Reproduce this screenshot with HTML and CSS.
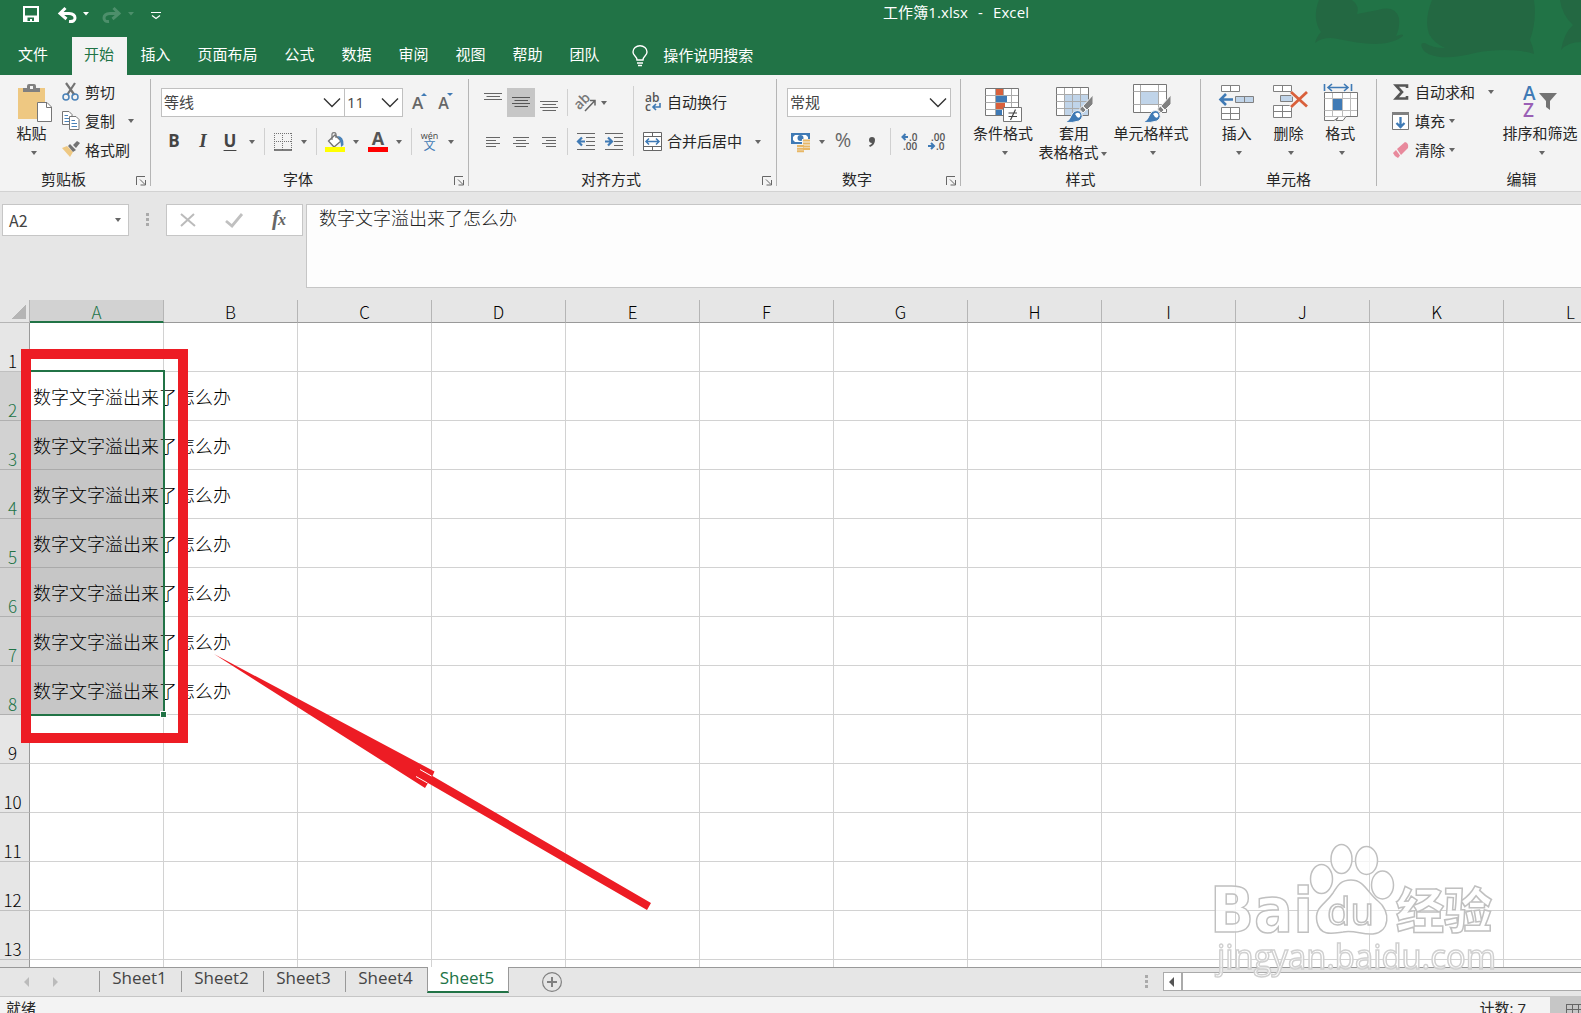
FILE: index.html
```html
<!DOCTYPE html>
<html lang="zh-CN">
<head>
  <meta charset="UTF-8" />
  <title>工作簿1.xlsx - Excel</title>
  <link rel="stylesheet" href="styles.css">
</head>
<body>
  <!-- Title bar and tabs -->
  <header class="top">
    <svg class="clouds" width="281" height="75" viewBox="1300 0 281 75">
      <path d="M1319 0C1314 12 1315 24 1321 32Q1317 36 1315 43Q1324 36 1338 39C1362 44 1388 48 1403 36Q1404 33 1396 36Q1400 28 1399 18Q1395 5 1378 10L1357 14Q1360 6 1352 0Z" />
      <path d="M1432 0Q1424 20 1429 34Q1434 43 1445 48Q1432 48 1425 43Q1418 42 1424 51C1435 60 1455 58 1475 53C1500 48 1522 50 1534 54Q1533 46 1530 40Q1537 20 1534 0Z" />
      <path d="M1560 0Q1562 15 1573 25Q1564 33 1561 50Q1568 42 1581 42V0Z" />
    </svg>
    <div class="title-row">
      <svg class="quick" width="170" height="37" viewBox="0 0 170 37">
        <path d="M24 7H38V21H24Z" fill="none" stroke="#fff" stroke-width="2" />
        <path d="M25 15.500H37V21H25Z" fill="#fff" />
        <path d="M27.500 17.500H34V21H32V19H30V21H27.500Z" fill="#217346" />
        <g fill="none" stroke="#fff" stroke-width="3">
          <path d="M60 13.500H69Q75 14 75 18T69 21.500" />
          <path d="M65.500 8L60 13.500L66.500 19" />
        </g>
        <path d="M83 12H89L86 15.500Z" fill="#fff" />
        <g fill="none" stroke="#4d8f6b" stroke-width="3">
          <path d="M119 13.500H110Q104 14 104 18T109 21.500" />
          <path d="M113.500 8L119 13.500L112.500 19" />
        </g>
        <path d="M128 12H134L131 15.500Z" fill="#4d8f6b" />
        <path d="M151 12.500H161M152 15.500L156 18.500L160 15.500" fill="none" stroke="#fff" stroke-width="1.200" />
      </svg>
      <span class="doc-name">工作簿1.xlsx&nbsp; -&nbsp; Excel</span>
    </div>
    <nav class="tabs">
      <span class="tab file">文件</span>
      <span class="tab active">开始</span>
      <span class="tab">插入</span>
      <span class="tab">页面布局</span>
      <span class="tab">公式</span>
      <span class="tab">数据</span>
      <span class="tab">审阅</span>
      <span class="tab">视图</span>
      <span class="tab">帮助</span>
      <span class="tab">团队</span>
      <span class="tell-me">
        <svg width="16" height="22" viewBox="0 0 16 22" fill="none" stroke="#fff" stroke-width="1.400">
          <path d="M5 16Q5 14 3 12Q1 10 1 8A7 6.300 0 0 1 15 8Q15 10 13 12Q11 14 11 16ZM5 19H11M6 21.500H10" />
        </svg>
        操作说明搜索
      </span>
    </nav>
  </header>

  <!-- Ribbon -->
  <section class="ribbon">
    <div class="group clipboard">
      <div class="group-body">
        <div class="big">
          <svg width="36" height="38" viewBox="0 0 36 38">
            <rect x="1" y="4" width="27" height="31" fill="#eec882" />
            <path d="M6 8V4H10V2Q10 0 12 0H17Q19 0 19 2V4H23V8Z" fill="#808080" />
            <rect x="13" y="2" width="3" height="3" fill="#f3f3f3" />
            <path d="M20.500 18.500H30L34.500 23V37.500H20.500Z" fill="#fff" stroke="#767676" />
            <path d="M29.500 18.500V23.500H34.500" fill="none" stroke="#767676" />
          </svg>
          <span>粘贴</span>
          <i class="dd"></i>
        </div>
        <div class="list">
          <div>
            <svg width="18" height="20" viewBox="0 0 18 20" fill="none">
              <path d="M4 1L12.500 13M13 1L5 13" stroke="#737373" stroke-width="2.200" />
              <circle cx="4" cy="15" r="3" stroke="#4a82b8" stroke-width="1.500" />
              <circle cx="13" cy="15" r="3" stroke="#4a82b8" stroke-width="1.500" />
            </svg>
            <span>剪切</span>
          </div>
          <div>
            <svg width="18" height="19" viewBox="0 0 18 19">
              <path d="M.5 .5H7L10 3.500V13.500H.5Z" fill="#fff" stroke="#767676" />
              <path d="M2.500 4.500H6M2.500 7.500H7M2.500 10.500H7" stroke="#4a82b8" />
              <path d="M7.500 5.500H14L17 8.500V18.500H7.500Z" fill="#fff" stroke="#767676" />
              <path d="M9.500 9.500H13M9.500 12.500H15M9.500 15.500H15" stroke="#4a82b8" />
            </svg>
            <span>复制</span>
            <i class="dd far"></i>
          </div>
          <div>
            <svg width="18" height="17" viewBox="0 0 18 17">
              <path d="M0 7L5 5L11 11L8 16Z" fill="#eec882" />
              <path d="M6 5L8 3L14 9L11 11ZM11 4L15 0L18 2L14 7Z" fill="#737373" />
            </svg>
            <span>格式刷</span>
          </div>
        </div>
      </div>
      <div class="group-label">剪贴板<svg class="launch" width="11" height="10"><use href="#launcher" /></svg></div>
    </div>

    <div class="group font">
      <div class="group-body rows">
        <div class="row">
          <div class="combo font-name">等线<svg class="chev" width="18" height="10"><use href="#chevron" /></svg></div>
          <div class="combo font-size">11<svg class="chev" width="18" height="10"><use href="#chevron" /></svg></div>
          <span class="grow-a">A<i class="tip up"></i></span>
          <span class="grow-a small">A<i class="tip down"></i></span>
        </div>
        <div class="row font-cells">
          <b class="letter">B</b>
          <b class="letter italic">I</b>
          <b class="letter under">U</b>
          <i class="dd"></i>
          <i class="sep"></i>
          <svg width="18" height="18" viewBox="0 0 18 18" fill="none" stroke="#737373">
            <path d="M0 .5H18M0 8.500H18M.5 0V17M8.500 0V17M17.500 0V17" stroke-dasharray="1 1" />
            <path d="M0 17H18" stroke="#555" stroke-width="1.500" />
          </svg>
          <i class="dd"></i>
          <i class="sep"></i>
          <svg width="20" height="20" viewBox="0 0 20 20">
            <path d="M3.500 9L10 3L16 9L9 15Z" fill="#fff" stroke="#737373" stroke-width="1.300" />
            <path d="M7 8V2Q7 .7 9 .7T11 2V6" fill="none" stroke="#737373" stroke-width="1.200" />
            <path d="M12 4Q19 4 18.500 13L16 15Q16 8 12 4Z" fill="#4a82b8" />
            <rect y="15" width="20" height="5" fill="#ff0" />
          </svg>
          <i class="dd"></i>
          <span class="font-color">A</span>
          <i class="dd"></i>
          <i class="sep"></i>
          <span class="pinyin"><span>wén</span><span class="wen">文</span></span>
          <i class="dd"></i>
        </div>
      </div>
      <div class="group-label">字体<svg class="launch" width="11" height="10"><use href="#launcher" /></svg></div>
    </div>

    <div class="group align">
      <div class="group-body">
        <div class="rows align-left">
          <div class="row align-cells">
            <svg width="18" height="29" stroke="#666"><path d="M0 5.500H18M2.500 8.500H16M0 11.500H18" /></svg>
            <span class="pressed"><svg width="18" height="29" stroke="#555"><path d="M0 9.500H18M2.500 12.500H16M0 15.500H18M2.500 18.500H16" /></svg></span>
            <svg width="18" height="29" stroke="#666"><path d="M0 13.500H18M2.500 16.500H16M0 19.500H18M2.500 22.500H16" /></svg>
            <i class="sep"></i>
            <svg width="20" height="18" viewBox="0 0 20 18">
              <text x="-2" y="12" class="ab" transform="rotate(-45 6 8)">ab</text>
              <path d="M9 17L19 6.500M14 6.500H19V11.500" fill="none" stroke="#666" stroke-width="1.500" />
            </svg>
            <i class="dd"></i>
          </div>
          <div class="row align-cells">
            <svg width="14" height="12" stroke="#666"><path d="M0 1.500H14M0 4.500H10M0 7.500H14M0 10.500H10" /></svg>
            <svg width="16" height="12" stroke="#666"><path d="M0 1.500H16M3 4.500H13M0 7.500H16M3 10.500H13" /></svg>
            <svg width="14" height="12" stroke="#666"><path d="M0 1.500H14M4 4.500H14M0 7.500H14M4 10.500H14" /></svg>
            <i class="sep"></i>
            <svg width="18" height="17" viewBox="0 0 18 17" fill="none">
              <path d="M0 .5H18M9 4.500H18M9 8.500H18M9 12.500H18M0 16.500H18" stroke="#666" />
              <path d="M8 8.500H1M5 4.500L1 8.500L5 12.500" stroke="#3f7ab5" stroke-width="2.200" />
            </svg>
            <svg width="18" height="17" viewBox="0 0 18 17" fill="none">
              <path d="M0 .5H18M9 4.500H18M9 8.500H18M9 12.500H18M0 16.500H18" stroke="#666" />
              <path d="M0 8.500H7M3 4.500L7 8.500L3 12.500" stroke="#3f7ab5" stroke-width="2.200" />
            </svg>
          </div>
        </div>
        <div class="rows align-right">
          <div class="row">
            <svg width="19" height="20" viewBox="0 0 19 20">
              <text x="2" y="9" class="abc">ab</text>
              <text x="2" y="18" class="abc">c</text>
              <path d="M17 10V14H10M13 11L10 14L13 17" fill="none" stroke="#3f7ab5" stroke-width="1.600" />
            </svg>
            <span>自动换行</span>
          </div>
          <div class="row">
            <svg width="19" height="19" viewBox="0 0 19 19" fill="none">
              <path d="M.5 .5H18.500V18.500H.5ZM.5 4.500H18.500M.5 14.500H18.500M9.500 .5V4.500M9.500 14.500V18.500" fill="#fff" stroke="#666" />
              <path d="M3 9.500H16M6 6.500L3 9.500L6 12.500M13 6.500L16 9.500L13 12.500" stroke="#3f7ab5" stroke-width="1.500" />
            </svg>
            <span>合并后居中</span>
            <i class="dd merge"></i>
          </div>
        </div>
      </div>
      <div class="group-label">对齐方式<svg class="launch" width="11" height="10"><use href="#launcher" /></svg></div>
    </div>

    <div class="group number">
      <div class="group-body rows">
        <div class="row">
          <div class="combo number-format">常规<svg class="chev" width="18" height="10"><use href="#chevron" /></svg></div>
        </div>
        <div class="row number-cells">
          <svg width="20" height="20" viewBox="0 0 20 20">
            <path d="M0 1H19V12H0Z" fill="#3f7ab5" />
            <path d="M2 5L4 3H15L17 5V8L15 10H4L2 8Z" fill="#fff" />
            <circle cx="9.500" cy="6" r="3" fill="#3f7ab5" />
            <path d="M11 7H20V18H14V21H5V13H11Z" fill="#f3f3f3" />
            <path d="M12 8.500H19M12 11.500H19M12 14.500H19M12 17H19M6 14H13M6 16.700H13M6 19.200H13" stroke="#e8b765" stroke-width="1.900" />
          </svg>
          <i class="dd"></i>
          <span class="percent">%</span>
          <svg width="8" height="10" viewBox="0 0 8 10"><path d="M4 0A3 3 0 0 1 7 3Q7 8 2 10L1 8.500Q4 7 4 6A3 3 0 0 1 4 0Z" fill="#555" /></svg>
          <i class="sep"></i>
          <svg width="17" height="19" viewBox="0 0 17 19">
            <path d="M7 5H1.500M4.500 2L1.500 5L4.500 8" fill="none" stroke="#3f7ab5" stroke-width="2" />
            <text x="8" y="9" class="dec">.0</text>
            <text x="2" y="18" class="dec">.00</text>
          </svg>
          <svg width="17" height="19" viewBox="0 0 17 19">
            <text x="3" y="9" class="dec">.00</text>
            <text x="8" y="18" class="dec">.0</text>
            <path d="M0 14H6M3 11L6 14L3 17" fill="none" stroke="#3f7ab5" stroke-width="2" />
          </svg>
        </div>
      </div>
      <div class="group-label">数字<svg class="launch" width="11" height="10"><use href="#launcher" /></svg></div>
    </div>

    <div class="group styles">
      <div class="group-body">
        <div class="big cond">
          <svg width="38" height="38" viewBox="0 0 38 38">
            <path d="M1.500 4.500H34.500V31.500H1.500Z" fill="#fff" stroke="#767676" />
            <path d="M1.500 11.500H34M1.500 18.500H34M1.500 25.500H34M11.500 5V31M19.500 5V31M27.500 5V31" fill="none" stroke="#aaa" />
            <path d="M12 5H19V11H12ZM12 19H21V25H12Z" fill="#d9603b" />
            <path d="M12 12H23V18H12ZM12 26H18V31H12Z" fill="#3f7ab5" />
            <path d="M19.500 23.500H37.500V37.500H19.500Z" fill="#fff" stroke="#767676" />
            <path d="M24.500 29H33M24.500 32.500H33M31.500 25.500L26.500 36" stroke="#444" stroke-width="1.200" />
          </svg>
          <span>条件格式</span>
          <i class="dd"></i>
        </div>
        <div class="big table-style">
          <svg width="38" height="38" viewBox="0 0 38 38">
            <path d="M1.500 3.500H33.500V31.500H1.500Z" fill="#fff" stroke="#767676" />
            <path d="M10 11H33V31H10Z" fill="#c0d4e9" />
            <path d="M1.500 10.500H33M1.500 17.500H33M1.500 24.500H33M9.500 4V31M17.500 4V31M25.500 4V31" stroke="#aaa" />
            <use href="#brush" />
          </svg>
          <span>套用</span>
          <span class="line-two">表格格式<i class="dd"></i></span>
        </div>
        <div class="big cell-style">
          <svg width="38" height="38" viewBox="0 0 38 38">
            <path d="M.5 .5H33.500V28.500H.5Z" fill="#fff" stroke="#767676" />
            <path d="M.5 7.500H33M.5 20.500H33M7.500 1V28M25.500 1V28" stroke="#aaa" />
            <path d="M8 8H25V20H8Z" fill="#c0d4e9" />
            <use href="#brush" />
          </svg>
          <span>单元格样式</span>
          <i class="dd"></i>
        </div>
      </div>
      <div class="group-label plain">样式</div>
    </div>

    <div class="group cells">
      <div class="group-body">
        <div class="big wide">
          <svg width="38" height="38" viewBox="0 0 38 38" fill="#fff" stroke="#808080">
            <path d="M3.500 1.500H21.500V7.500H3.500ZM12.500 1.500V7.500M3.500 23.500H21.500V35.500H3.500ZM12.500 23.500V35.500M3.500 29.500H21.500" />
            <path d="M17.500 12.500H35.500V18.500H17.500ZM26.500 12.500V18.500" fill="#c0d4e9" />
            <path d="M15 15.500H2.500M8 10L2.500 15.500L8 21" fill="none" stroke="#3f7ab5" stroke-width="2.600" />
          </svg>
          <span>插入</span>
          <i class="dd"></i>
        </div>
        <div class="big narrow">
          <svg width="38" height="38" viewBox="0 0 38 38" fill="#fff" stroke="#808080">
            <path d="M3.500 1.500H21.500V7.500H3.500ZM12.500 1.500V7.500M3.500 21.500H21.500V33.500H3.500ZM12.500 21.500V33.500M3.500 27.500H21.500" />
            <path d="M10.500 11.500H22.500V17.500H10.500Z" fill="#c0d4e9" />
            <path d="M21 8L37 22.500M37 8L21 23" fill="none" stroke="#f3f3f3" stroke-width="5" />
            <path d="M21 8L37 22.500M37 8L21 23" fill="none" stroke="#d9603b" stroke-width="2.800" />
          </svg>
          <span>删除</span>
          <i class="dd"></i>
        </div>
        <div class="big wide">
          <svg width="38" height="38" viewBox="0 0 38 38" fill="none">
            <path d="M2.500 0V7M29.500 0V7M6 3.500H26M10 0L6 3.500L10 7M22 0L26 3.500L22 7" stroke="#3f7ab5" stroke-width="1.600" />
            <path d="M2.500 8.500H35.500V32.500H24L21 36.500H14L16 33.500L12 36.500H2.500Z" fill="#fff" stroke="#767676" />
            <path d="M2.500 14.500H35M2.500 26.500H35M2.500 32.500H24M10.500 9V32M20.500 9V32M28.500 9V32" stroke="#bbb" />
            <path d="M11 15H20V26H11Z" fill="#3f7ab5" />
          </svg>
          <span>格式</span>
          <i class="dd"></i>
        </div>
      </div>
      <div class="group-label plain">单元格</div>
    </div>

    <div class="group editing">
      <div class="group-body">
        <div class="list">
          <div>
            <svg width="18" height="18" viewBox="0 0 18 18"><path d="M15 5V2.500H4L10 9L4 15.500H15V13" fill="none" stroke="#555" stroke-width="2.600" /></svg>
            <span>自动求和</span>
            <i class="dd sum"></i>
          </div>
          <div>
            <svg width="18" height="20" viewBox="0 0 18 20">
              <path d="M.5 1.500H16.500V18.500H.5Z" fill="#fff" stroke="#767676" />
              <path d="M0 1H17V4H0Z" fill="#808080" />
              <path d="M8.500 6V16M4.500 12L8.500 16L12.500 12" fill="none" stroke="#3f7ab5" stroke-width="2.300" />
            </svg>
            <span>填充</span>
            <i class="dd near"></i>
          </div>
          <div>
            <svg width="18" height="18" viewBox="0 0 18 18">
              <path d="M5 8L13 1Q17 2 16 7L9 14Z" fill="#e8899c" />
              <path d="M4 9L8 14.500L6 17Q2 15 1 12Z" fill="#e8899c" />
            </svg>
            <span>清除</span>
            <i class="dd near"></i>
          </div>
        </div>
        <div class="big sort">
          <svg width="36" height="38" viewBox="0 0 36 38">
            <text x="1" y="16" class="sort-a">A</text>
            <text x="1" y="33" class="sort-z">Z</text>
            <path d="M17 9H35L28 17V26L24 23V17Z" fill="#737373" />
          </svg>
          <span>排序和筛选</span>
          <i class="dd"></i>
        </div>
      </div>
      <div class="group-label plain">编辑</div>
    </div>
  </section>

  <!-- Formula bar -->
  <section class="formula">
    <div class="name-box">A2<i class="dd"></i></div>
    <div class="dots"><i></i><i></i><i></i></div>
    <div class="fx-box">
      <svg width="16" height="14" viewBox="0 0 16 14"><path d="M1 1L15 13M14 1L1 13" stroke="#bbb" stroke-width="2" /></svg>
      <svg width="18" height="15" viewBox="0 0 18 15"><path d="M1 8L7 13L17 1" fill="none" stroke="#c0c0c0" stroke-width="2.800" /></svg>
      <span class="fx">f<small>x</small></span>
    </div>
    <div class="formula-text">数字文字溢出来了怎么办</div>
  </section>

  <!-- Sheet -->
  <main class="sheet">
    <div class="col-heads" id="col-heads"></div>
    <div id="grid"></div>
    <div class="selection"></div>
    <div class="handle"></div>
  </main>

  <footer>
    <div class="sheet-tabs">
      <i class="nav-left"></i><i class="nav-right"></i>
      <span>Sheet1</span>
      <span>Sheet2</span>
      <span>Sheet3</span>
      <span>Sheet4</span>
      <span class="current">Sheet5</span>
      <svg width="20" height="20" viewBox="0 0 20 20" fill="none" stroke="#808080"><circle cx="10" cy="10" r="9.400" stroke-width="1.200" /><path d="M5 10H15M10 5V15" stroke-width="2" /></svg>
      <div class="dots"><i></i><i></i><i></i></div>
      <div class="scroll"><i class="nav-left"></i></div>
    </div>
    <div class="status">
      <span>就绪</span>
      <span class="count">计数: 7</span>
      <div class="view"><svg width="17" height="14" viewBox="0 0 17 14"><path d="M.5 .5H18M.5 5.500H18M.5 10.500H18M.5 0V14M6.500 0V14M12.500 0V14" fill="none" stroke="#666" /></svg></div>
    </div>
  </footer>

  <!-- Marks drawn over the sheet -->
  <div class="red-box"></div>
  <svg class="overlay" viewBox="0 0 1581 1013">
    <defs>
      <path id="chevron" d="M1 .5L9 8.500L17 .5" fill="none" stroke="#333" stroke-width="1.400" />
      <path id="launcher" d="M.5 9V.5H9M4 3.500L9 8.500M9.500 4V9H4.500" fill="none" stroke="#666" />
      <g id="brush">
        <path d="M38 11V20L32 26L28 22Z" fill="#808080" stroke="#f3f3f3" />
        <path d="M27.500 22L31 26L28 29L24.500 25Z" fill="#808080" stroke="#f3f3f3" />
        <path d="M10 38.500Q15 36 16 32Q19 25 25 27Q30 33 24 37Q18 39 10 38.500Z" fill="#3f7ab5" stroke="#f3f3f3" />
        <path d="M20 30Q24 27 25.500 31Q25 35 22 33Z" fill="#fff" />
      </g>
    </defs>
    <path d="M214 654L434.500 771.500L432.500 776L651 903L647 910L428 783L425 788Z" fill="#ed1c24" />
    <path d="M420 769.500L431.500 776M416 776.500L427.500 783" stroke="#fff" stroke-width="1" />
    <g class="mark">
      <ellipse cx="1321.500" cy="879" rx="11" ry="14.500" />
      <ellipse cx="1341.500" cy="859" rx="10.500" ry="14.500" />
      <ellipse cx="1366.500" cy="860.500" rx="11" ry="14" />
      <ellipse cx="1382.500" cy="885" rx="11" ry="14" />
      <path d="M1351 880C1364 880 1367 892 1378 901C1391 911 1390 932 1373 934C1362 935 1355 930 1343 932C1334 933 1320 937 1317 922C1314 907 1325 905 1333 893C1338 885 1341 880 1351 880Z" />
      <text x="1210" y="932" class="bai" textLength="103" lengthAdjust="spacingAndGlyphs">Bai</text>
      <text x="1327" y="925" class="du" textLength="47" lengthAdjust="spacingAndGlyphs">du</text>
      <text x="1396" y="928" class="jy">经验</text>
      <text x="1217" y="969" class="url" textLength="279" lengthAdjust="spacingAndGlyphs">jingyan.baidu.com</text>
    </g>
  </svg>

  <script>
    const heads = document.getElementById("col-heads");
    const grid = document.getElementById("grid");
    const cols = "ABCDEFGHIJKL".split("");

    heads.innerHTML = '<div class="corner"></div>' +
      cols.map(c => `<div class="col-head${c === "A" ? " on" : ""}">${c}</div>`).join("");

    for (let r = 1; r <= 14; r++) {
      const selected = r >= 2 && r <= 8;
      const row = document.createElement("div");
      row.className = "grid-row" + (selected ? " picked" : "") + (r === 2 ? " first" : "");
      row.innerHTML = `<div class="row-head">${r < 14 ? r : ""}</div>` +
        cols.map((c, i) => `<div class="cell">${selected && i === 0 ? "<span>数字文字溢出来了怎么办</span>" : ""}</div>`).join("");
      grid.appendChild(row);
    }
  </script>
</body>
</html>
```
FILE: styles.css
```css
* {
  box-sizing: border-box;
}

body {
  margin: 0;
  width: 1581px;
  height: 1013px;
  overflow: hidden;
  position: relative;
  font-family: "Open Sans", "Noto Sans CJK SC", sans-serif;
  font-size: 15px;
  line-height: 20px;
  color: #262626;
  background: #e6e6e6;
}

svg {
  flex: none;
  overflow: visible;
}

/* title bar */
.top {
  height: 75px;
  background: #217346;
  color: white;
  position: relative;
}

.clouds {
  position: absolute;
  right: 0;
  top: 0;
  fill: #236842;
  overflow: hidden;
}

.title-row {
  height: 37px;
  display: flex;
}

.doc-name {
  margin-left: 713px;
  padding-top: 2px;
  font-size: 15px;
  word-spacing: 1px;
  letter-spacing: 0.1px;
  white-space: pre;
}

.tabs {
  display: flex;
  height: 38px;
  line-height: 34px;
}

.tab {
  padding: 0 13.5px;
}

.tab.file {
  width: 72px;
  padding-left: 18px;
}

.tab.active {
  width: 55px;
  padding: 0 12px;
  background: #f3f3f3;
  color: #217346;
}

.tell-me {
  display: flex;
  align-items: center;
  gap: 15px;
  height: 36px;
  margin-left: 19px;
}

/* ribbon */
.ribbon {
  display: flex;
  height: 117px;
  background: #f3f3f3;
  border-bottom: 1px solid #d2d2d2;
  overflow: hidden;
}

.group {
  flex: none;
  display: flex;
  flex-direction: column;
  height: 111px;
  padding-top: 5px;
  border-right: 1px solid #b5b5b5;
  border-image: linear-gradient(transparent 5px, #b5b5b5 5px) 1;
}

.clipboard { width: 151px; }
.font { width: 318px; }
.align { width: 308px; }
.number { width: 184px; }
.styles { width: 240px; }
.cells { width: 176px; }
.editing { width: 290px; }

.group-body {
  display: flex;
  flex: 1;
}

.group-label {
  display: flex;
  justify-content: center;
  height: 20px;
  margin-bottom: -4px;
  padding-right: 23px;
  position: relative;
  line-height: 18px;
}

.group-label.plain {
  padding-right: 0;
}

.launch {
  position: absolute;
  right: 3px;
  top: 6px;
}

.big {
  display: flex;
  flex-direction: column;
  align-items: center;
  padding-top: 4px;
  white-space: nowrap;
}

.big > span {
  margin-top: 1px;
}

.big > .line-two {
  margin-top: -1px;
  margin-left: -11px;
  position: relative;
}

.line-two .dd {
  position: absolute;
  left: 63px;
  top: 10px;
}

.big > .dd {
  margin: 8px 0 0 4px;
}

.clipboard .big {
  width: 63px;
  padding-left: 6px;
}

.clipboard .big > span {
  margin-left: -6px;
}

.clipboard .big > .dd {
  margin-left: -1px;
}

.cond { width: 84px; }
.table-style { width: 58px; }
.cell-style { width: 96px; }
.cell-style > svg { margin-left: 2px; }
.wide { width: 72px; }
.narrow { width: 32px; }

.wide > svg,
.narrow > svg {
  margin-left: 1px;
}

.list > div {
  display: flex;
  align-items: center;
  height: 29px;
  gap: 5px;
  white-space: nowrap;
}

.clipboard .list {
  margin: -3px 0 0 -1px;
}

.dd {
  display: inline-block;
  flex: none;
  width: 0;
  border: 3.5px solid transparent;
  border-top: 4px solid #666;
  border-bottom: 0;
}

.dd.far {
  margin-left: 8px;
}

.dd.sum {
  margin-left: 8px;
}

.dd.near {
  margin-left: -1px;
}

.dd.merge {
  margin-left: 8px;
}

.rows {
  display: flex;
  flex-direction: column;
  gap: 10px;
  padding: 8px 0 0 10px;
}

.row {
  display: flex;
  align-items: center;
  height: 29px;
}

.combo {
  display: flex;
  align-items: center;
  justify-content: space-between;
  height: 29px;
  padding: 0 3px 2px 2px;
  border: 1px solid #c0c0c0;
  background: white;
  color: #444;
}

.chev {
  margin-top: 3px;
}

.font-name { width: 184px; }
.font-size { width: 59px; margin-left: -1px; }
.number-format { width: 164px; }

.grow-a {
  position: relative;
  margin-left: 9px;
  font-size: 17px;
  font-weight: 600;
  color: #666;
}

.grow-a.small {
  margin-left: 15px;
  font-size: 16px;
}

.tip {
  position: absolute;
  right: -4px;
  top: 0;
  border: 3px solid transparent;
}

.tip.up {
  border-top: 0;
  border-bottom-color: #3f7ab5;
}

.tip.down {
  border-bottom: 0;
  border-top-color: #3f7ab5;
}

.font-cells,
.align-cells,
.number-cells {
  display: grid;
  justify-items: center;
}

.font-cells {
  grid-template-columns: 26px 32px 22px 22px 2px 35px 8px 16px 22px 20px 24px 18px 7px 29px 14px;
}

.align-cells {
  grid-template-columns: 28px 28px 28px 8px 30px 26px;
}

.align-cells .dd {
  margin-left: -20px;
}

.number-cells {
  grid-template-columns: 27px 16px 26px 32px 5px 32px 23px;
}

.sep {
  width: 1px;
  height: 27px;
  background: #d0d0d0;
}

.letter {
  font-size: 17px;
  line-height: 18px;
  margin-top: -2px;
  color: #444;
}

.italic {
  font-family: "Liberation Serif", serif;
  font-style: italic;
  font-size: 19px;
}

.under {
  text-decoration: underline;
  text-decoration-thickness: 1px;
  text-underline-offset: 3px;
}

.font-color {
  width: 20px;
  height: 20px;
  border-bottom: 5px solid red;
  text-align: center;
  font-size: 18px;
  font-weight: 700;
  line-height: 13px;
  color: #555;
}

.pinyin {
  display: flex;
  flex-direction: column;
  align-items: center;
  font-size: 9px;
  line-height: 8px;
  color: #444;
}

.wen {
  font-size: 12px;
  line-height: 12px;
  color: #3f7ab5;
}

.align-left {
  width: 165px;
  flex: none;
  margin-bottom: 14px;
  padding-bottom: 0;
  border-right: 1px solid #d0d0d0;
  border-image: linear-gradient(transparent 7px, #d0d0d0 7px) 1;
}

.align-right {
  padding-left: 9px;
}

.align-right .row {
  gap: 5px;
}

.align-right .row span {
  margin-top: -2px;
}

.pressed {
  width: 28px;
  height: 29px;
  display: flex;
  justify-content: center;
  background: #c6c6c6;
}

.ab {
  font-size: 14px;
  font-weight: 600;
  fill: #777;
}

.abc {
  font-size: 12px;
  font-weight: 600;
  fill: #555;
}

.dec {
  font-size: 10px;
  font-weight: 600;
  fill: #555;
}

.percent {
  font-size: 20px;
  margin-top: -3px;
  color: #666;
}

.editing .list {
  width: 124px;
  margin-top: -3px;
  padding-left: 15px;
}

.sort {
  width: 78px;
}

.sort-a,
.sort-z {
  font-size: 19px;
  font-weight: 600;
  fill: #3f7ab5;
}

.sort-z {
  fill: #9a5fb5;
}

/* formula bar */
.formula {
  display: flex;
  align-items: flex-start;
  height: 108px;
  padding: 12px 0 0 2px;
}

.name-box,
.fx-box {
  display: flex;
  align-items: center;
  justify-content: space-between;
  height: 32px;
  width: 127px;
  padding: 0 7px 0 6px;
  border: 1px solid #c6c6c6;
  background: white;
  color: #444;
}

.name-box {
  font-size: 16px;
  font-family: "Noto Sans CJK SC", sans-serif;
}

.dots {
  display: flex;
  flex-direction: column;
  gap: 2px;
}

.dots i {
  width: 3px;
  height: 3px;
  background: #aaa;
}

.formula .dots {
  margin: 9px 17px 0;
}

.fx-box {
  width: 137px;
  padding: 0 16px 0 13px;
}

.fx {
  font-family: "Liberation Serif", serif;
  font-style: italic;
  font-weight: bold;
  font-size: 21px;
  margin-top: -2px;
  color: #666;
}

.fx small {
  font-size: 16px;
  margin-left: -1px;
}

.formula-text {
  flex: 1;
  height: 84px;
  margin-left: 3px;
  padding: 3px 12px;
  border: 1px solid #c6c6c6;
  border-right: 0;
  background: #fdfdfd;
  font-size: 18px;
  font-weight: 300;
  color: #222;
}

/* sheet */
.sheet {
  position: relative;
  height: 667px;
  overflow: hidden;
  font-family: "Noto Sans CJK SC", sans-serif;
  font-size: 17px;
  font-weight: 300;
  color: #000;
}

.col-heads,
.grid-row {
  display: flex;
  width: 1640px;
}

.col-heads {
  height: 23px;
}

.corner {
  width: 30px;
  border-right: 1px solid #b5b5b5;
  border-bottom: 1px solid #b5b5b5;
  background: linear-gradient(135deg, transparent 50%, #b5b5b5 50%) 11px 4px / 15px 15px no-repeat;
}

.col-head {
  width: 134px;
  border-right: 1px solid #b5b5b5;
  border-bottom: 1px solid #999;
  text-align: center;
  line-height: 23px;
}

.col-head.on {
  background: #d2d2d2;
  border-bottom: 2px solid #217346;
  color: #217346;
}

.grid-row {
  height: 49px;
}

.row-head {
  width: 30px;
  padding: 28px 4px 0 0;
  border-right: 1px solid #999;
  border-bottom: 1px solid #c0c0c0;
  text-align: center;
}

.picked .row-head {
  background: #d2d2d2;
  border-bottom-color: #b0b0b0;
  color: #217346;
}

.cell {
  width: 134px;
  border-right: 1px solid #d2d2d2;
  border-bottom: 1px solid #d2d2d2;
  background: white;
}

.picked .cell:nth-child(2) {
  position: relative;
  background: #c6c6c6;
  border-bottom-color: #aaa;
}

.first .cell:nth-child(2) {
  background: white;
}

.cell span {
  display: block;
  padding: 14px 0 0 3px;
  font-size: 18px;
  white-space: nowrap;
}

.selection {
  position: absolute;
  left: 28px;
  top: 70px;
  width: 137px;
  height: 346px;
  border: 2px solid #217346;
}

.handle {
  position: absolute;
  left: 160px;
  top: 411px;
  width: 7px;
  height: 7px;
  border: 1px solid white;
  background: #217346;
}

/* sheet tabs and status bar */
.sheet-tabs {
  display: flex;
  height: 30px;
  padding-left: 24px;
  border-top: 1px solid #999;
  border-bottom: 1px solid #c6c6c6;
  font-size: 17px;
}

.nav-left,
.nav-right {
  width: 5px;
  height: 10px;
  margin-top: 9px;
  border: 5px solid transparent;
  border-left: 0;
  border-right-color: #bbb;
}

.nav-right {
  margin: 9px 41px 0 24px;
  border: 5px solid transparent;
  border-right: 0;
  border-left-color: #bbb;
}

.sheet-tabs > span {
  width: 82px;
  height: 21px;
  margin-top: 3px;
  padding-right: 2px;
  border-left: 1px solid #999;
  text-align: center;
  line-height: 13px;
  color: #444;
}

.sheet-tabs .current {
  height: 26px;
  margin-top: -1px;
  padding-top: 4px;
  border: 1px solid #999;
  border-top: 0;
  border-bottom: 2px solid #217346;
  background: white;
  color: #217346;
}

.sheet-tabs > svg {
  margin: 4px 0 0 33px;
}

.sheet-tabs .dots {
  margin: 7px 15px 0 583px;
}

.scroll {
  flex: 1;
  height: 19px;
  margin-top: 4px;
  border: 1px solid #aaa;
  border-right: 0;
  background: linear-gradient(90deg, white 17px, #aaa 17px, #aaa 19px, white 19px);
}

.scroll .nav-left {
  display: block;
  margin: 4px 0 0 5px;
  border-right-color: #555;
}

.status {
  display: flex;
  height: 16px;
  padding: 1px 0 0 6px;
  background: #f3f3f3;
}

.count {
  margin-left: auto;
  padding-right: 24px;
}

.view {
  width: 31px;
  margin-top: -1px;
  padding: 5px 0 0 16px;
  background: #c6c6c6;
}

/* marks */
.red-box {
  position: absolute;
  left: 21px;
  top: 349px;
  width: 167px;
  height: 394px;
  border: 10px solid #ed1c24;
}

.overlay {
  position: absolute;
  left: 0;
  top: 0;
  width: 1581px;
  height: 1013px;
}

.mark {
  fill: rgba(255, 255, 255, 0.75);
  stroke: #c0c0c0;
  stroke-width: 1.5px;
  filter: blur(0.5px);
  font-family: "Open Sans", "Noto Sans CJK SC", sans-serif;
}

.bai {
  font-family: "DejaVu Sans", sans-serif;
  font-size: 62px;
  font-weight: bold;
}

.du {
  font-size: 38px;
}

.jy {
  font-size: 48px;
  font-weight: 900;
}

.url {
  font-size: 34px;
  stroke: #d0d0d0;
}
```
